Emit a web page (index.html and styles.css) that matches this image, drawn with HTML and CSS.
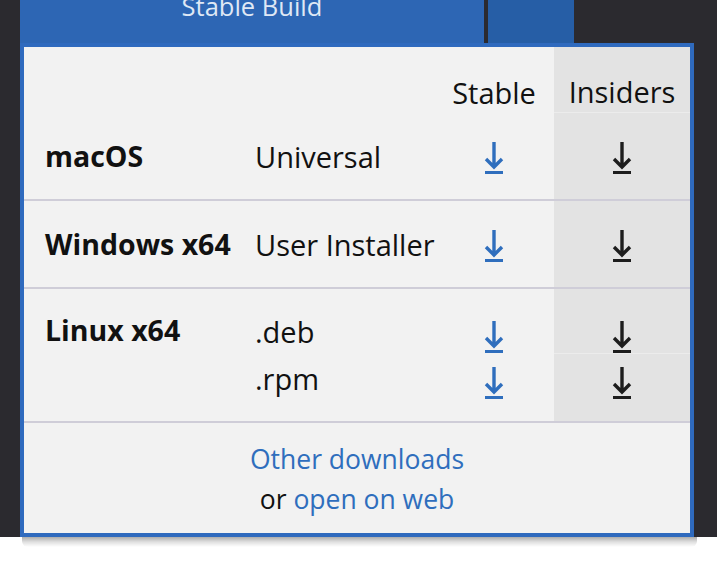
FILE: index.html
```html
<!DOCTYPE html>
<html lang="en">
<head>
<meta charset="utf-8">
<title>Download</title>
<link rel="stylesheet" href="styles.css">
</head>
<body>
<div class="stage">
  <div class="btn-group">
    <div class="btn-main">Stable Build</div>
    <div class="btn-drop"></div>
  </div>
  <div class="panel">
    <div class="row head">
      <div class="c-os"></div>
      <div class="c-type"></div>
      <div class="c-st">Stable</div>
      <div class="c-in">Insiders</div>
    </div>
    <div class="row">
      <div class="c-os">macOS</div>
      <div class="c-type">Universal</div>
      <div class="c-st"><svg class="dl" viewBox="0 0 20 32"><path d="M10 0V25M2 17L10 25L18 17" /><rect x="1" y="29" width="18" height="3" /></svg></div>
      <div class="c-in"><svg class="dl dark" viewBox="0 0 20 32"><path d="M10 0V25M2 17L10 25L18 17" /><rect x="1" y="29" width="18" height="3" /></svg></div>
    </div>
    <div class="row">
      <div class="c-os">Windows x64</div>
      <div class="c-type">User Installer</div>
      <div class="c-st"><svg class="dl" viewBox="0 0 20 32"><path d="M10 0V25M2 17L10 25L18 17" /><rect x="1" y="29" width="18" height="3" /></svg></div>
      <div class="c-in"><svg class="dl dark" viewBox="0 0 20 32"><path d="M10 0V25M2 17L10 25L18 17" /><rect x="1" y="29" width="18" height="3" /></svg></div>
    </div>
    <div class="row multi">
      <div class="c-os">Linux x64</div>
      <div class="c-type"><div class="sub">.deb</div><div class="sub">.rpm</div></div>
      <div class="c-st">
        <div class="sub"><svg class="dl" viewBox="0 0 20 32"><path d="M10 0V25M2 17L10 25L18 17" /><rect x="1" y="29" width="18" height="3" /></svg></div>
        <div class="sub"><svg class="dl" viewBox="0 0 20 32"><path d="M10 0V25M2 17L10 25L18 17" /><rect x="1" y="29" width="18" height="3" /></svg></div>
      </div>
      <div class="c-in">
        <div class="sub first"><svg class="dl dark" viewBox="0 0 20 32"><path d="M10 0V25M2 17L10 25L18 17" /><rect x="1" y="29" width="18" height="3" /></svg></div>
        <div class="sub second"><svg class="dl dark" viewBox="0 0 20 32"><path d="M10 0V25M2 17L10 25L18 17" /><rect x="1" y="29" width="18" height="3" /></svg></div>
      </div>
    </div>
    <div class="foot">
      <div><a href="#">Other downloads</a></div>
      <div>or <a href="#">open on web</a></div>
    </div>
  </div>
</div>
<div class="panel-shadow"></div>
</body>
</html>
```

FILE: styles.css
```css
* { box-sizing: border-box; }
html, body { margin: 0; padding: 0; background: #ffffff; }
body { font-family: "Open Sans", "Noto Sans", sans-serif; color: #111; }

.stage {
  position: relative;
  display: flow-root;
  height: 537px;
  background: #2b2a2f;
  padding-left: 20px;
}

.btn-group {
  display: flex;
  gap: 4px;
  height: 60px;
  margin-top: -14px;
}
.btn-main {
  width: 464px;
  background: #2d66b4;
  color: #dfe8f5;
  font-size: 25.5px;
  text-align: center;
  line-height: 40px;
}
.btn-drop {
  width: 86px;
  background: #265ea6;
}

.panel {
  position: absolute;
  z-index: 2;
  left: 20px;
  top: 43px;
  width: 674px;
  height: 494px;
  background: #f2f2f2;
  border: 4px solid #2f6abe;
}

.panel-shadow {
  height: 10px;
  margin: 0 20px 0 22px;
  border-radius: 0 0 6px 6px;
  background: linear-gradient(to bottom, rgba(0, 0, 0, 0.32), rgba(0, 0, 0, 0.12) 50%, rgba(0, 0, 0, 0));
}

.row {
  display: grid;
  grid-template-columns: 231px 179px 120px 136px;
  height: 88px;
  border-bottom: 2px solid #cfcdd8;
  font-size: 29px;
  white-space: nowrap;
}
.row > div { display: flex; align-items: center; }
.c-os {
  padding-left: 21px;
  font-weight: 700;
  font-size: 28.5px;
}
.c-st, .c-in { justify-content: center; }
.c-in { background: #e3e3e3; }
.row > .c-st, .row > .c-in { padding-top: 4px; }

.row.head { height: 66px; border-bottom: none; }
.row.head > div { align-items: flex-end; padding-top: 0; padding-bottom: 1px; }
.row.head .c-in { border-bottom: 1px solid #ececec; }
.row.head .c-os { padding-left: 0; }

.dl {
  width: 20px;
  height: 32px;
  fill: #2f6ebd;
  stroke: #2f6ebd;
}
.dl path { fill: none; stroke-width: 3.4; }
.dl rect { stroke: none; }
.dl.dark { fill: #1d1d1d; stroke: #1d1d1d; }

.row.multi { height: 134px; }
.row.multi > div { flex-direction: column; align-items: stretch; justify-content: flex-start; }
.row.multi .c-os { padding-top: 22px; }
.row.multi .c-type { padding-top: 19px; }
.row.multi .c-type .sub { line-height: 47px; }
.row.multi .c-st { padding-top: 25px; }
.row.multi .c-st .sub { height: 46px; display: flex; align-items: center; justify-content: center; }
.row.multi .c-in { padding-top: 0; }
.row.multi .c-in .sub { display: flex; justify-content: center; }
.row.multi .c-in .first { padding-top: 32px; height: 65px; border-bottom: 1px solid #ececec; }
.row.multi .c-in .second { padding-top: 13px; }

.foot {
  text-align: center;
  font-size: 26.5px;
  line-height: 40px;
  padding-top: 16px;
}
.foot a { color: #2f6ebd; text-decoration: none; }
```
